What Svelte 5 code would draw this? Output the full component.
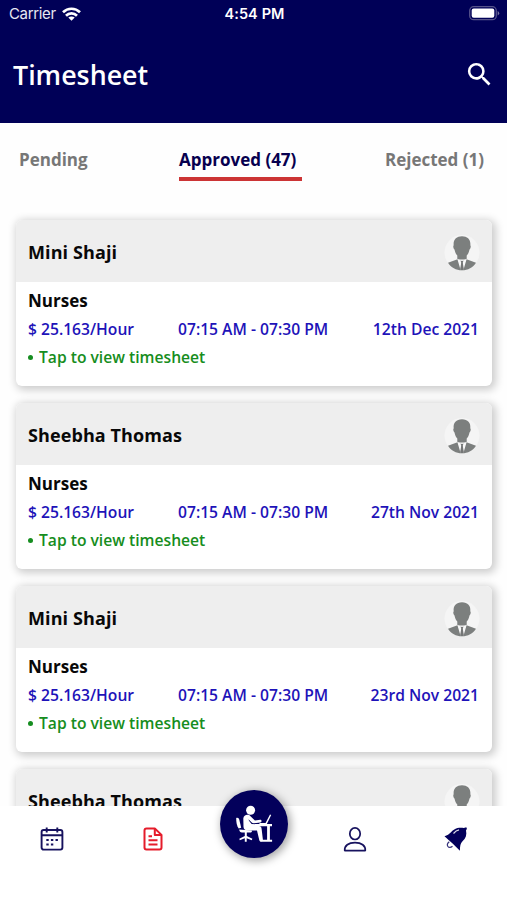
<script>
  const entries = [
    { name: 'Mini Shaji', date: '12th Dec 2021' },
    { name: 'Sheebha Thomas', date: '27th Nov 2021' },
    { name: 'Mini Shaji', date: '23rd Nov 2021' },
    { name: 'Sheebha Thomas' }
  ];
</script>

<div class="screen">
  <header>
    <div class="status">
      <div class="carrier">
        <span>Carrier</span>
        <svg width="19" height="14" viewBox="0 0 19 14" fill="none" stroke="#fff" stroke-width="2.700">
          <path d="M1 5.200C5.800.6 13.200.6 18 5.200M4 8.700c3-3 8-3 11 0" />
          <path d="M9.500 13.800L6.300 10.600c1.800-1.500 4.600-1.500 6.400 0z" fill="#fff" stroke="none" />
        </svg>
      </div>
      <span class="time">4:54 PM</span>
      <svg class="battery" width="31" height="15" viewBox="0 0 31 15">
        <rect x=".7" y=".7" width="26.600" height="13" rx="4" fill="none" stroke="#56538a" stroke-width="1.300" />
        <rect x="2.700" y="2.600" width="22.600" height="9.200" rx="2" fill="#fff" />
        <path d="M28.700 5v4.500q1.500-.7 1.500-2.250T28.700 5z" fill="#77749f" />
      </svg>
    </div>
    <div class="titlebar">
      <h1>Timesheet</h1>
      <svg width="31" height="31" viewBox="0 0 24 24" fill="#fff">
        <path d="M15.500 14h-.79l-.28-.27A6.471 6.471 0 0 0 16 9.500 6.500 6.500 0 1 0 9.500 16c1.610 0 3.090-.59 4.230-1.570l.27.28v.79l5 4.990L20.490 19l-4.990-5zm-6 0C7.010 14 5 11.990 5 9.500S7.010 5 9.500 5 14 7.010 14 9.500 11.990 14 9.500 14z" />
      </svg>
    </div>
  </header>

  <nav class="tabs">
    <span>Pending</span>
    <span class="active">Approved (47)</span>
    <span class="last">Rejected (1)</span>
  </nav>

  <main>
    {#each entries as entry}
      <article>
        <div class="head">
          <h2>{entry.name}</h2>
          <svg width="36" height="36" viewBox="0 0 36 36">
            <circle cx="18" cy="17.500" r="17.500" fill="#f5f5f5" />
            <path d="M18 1.300c5.700 0 9 3.500 8.300 9 .9.900.3 3.300-.8 4.300-.6 3-1.600 4.800-2.800 6v3.800h-9.400v-3.800c-1.200-1.200-2.200-3-2.800-6-1.100-1-1.700-3.400-.8-4.300-.7-5.500 2.600-9 8.300-9z" fill="#7c7f7e" />
            <path d="M13.500 24.300L4 27.700C7 32.500 12 35.300 18 35.300s11-2.800 14-7.600l-9.500-3.400L18 26z" fill="#7c7f7e" />
            <path d="M13.300 23.700l3.200 11 1.100-7h.8l1.100 7 3.200-11-4.700 2.400z" fill="#f8f8f8" />
            <path d="M16.700 26h2.600l-.5 1.800.9 6L18 35.200l-1.700-1.400.9-6z" fill="#747676" />
          </svg>
        </div>
        {#if entry.date}
          <div class="body">
            <h3>Nurses</h3>
            <div class="row">
              <span>$ 25.163/Hour</span>
              <span>07:15 AM - 07:30 PM</span>
              <span>{entry.date}</span>
            </div>
            <div class="tap"><i></i><span>Tap to view timesheet</span></div>
          </div>
        {/if}
      </article>
    {/each}
  </main>

  <footer>
    <svg width="24" height="24" viewBox="0 0 24 24" fill="none" stroke="#17125e" stroke-width="1.900">
      <rect x="1.600" y="3" width="20.800" height="19.600" rx="2" />
      <path d="M1.600 8.300h20.800M6.700.5v5M17.300.5v5" />
      <path d="M6.300 13h2.400m2.200 0h2.400m2.200 0h2.400M6.300 17.500h2.400m2.200 0h2.400" stroke-width="2" />
    </svg>
    <svg width="24" height="24" viewBox="0 0 24 24" fill="none" stroke="#e51c2b" stroke-width="2" stroke-linejoin="round">
      <path d="M5.500 1.500h8.300l6.700 6.400v12.600q0 2-2 2h-13q-2 0-2-2v-17q0-2 2-2z" />
      <path d="M13.800 1.500v6.400h6.700M7.500 9.300H11M7.500 13.300h9M7.500 17.600h9" />
    </svg>
    <div class="fab">
      <svg width="38" height="38" viewBox="0 0 38 38" fill="#fff">
        <circle cx="15.600" cy="5.200" r="4.500" />
        <path d="M8.300 13.500c.5-4.100 5.200-4.700 7.200-2.200l4.400 4.200 5.300-.7c1.700 0 1.900 2.200.3 2.600l-6.700.9c-1 0-1.700-.4-2.300-1l-3-3 .5 1.500 2.600 3.200 6 .2v1.800h1.300c1.900 0 2.400 1 2.700 2.700l1.300 11.100c.2 1.800-3.200 2.200-3.600.4l-2.300-9.700h-9.400c-2.500 0-3.800-1.200-4.100-3.500z" />
        <path d="M1.200 13c1.600-.9 2.700.2 3.100 1.700l1.900 8.100-2.500.8C1.800 21.200 1.200 17 1.200 13z" />
        <path d="M4.200 24.500l12.600 1q.7 2-2 2h-3v3.600l5.600 2.700-.7 1.400-5-1.900v3.400H9.800v-3.400l-5 1.900-.5-1.400 5.500-2.700v-3.600H7q-2.500 0-2.800-3z" />
        <path d="M20 19h17v2.200h-2.100v13.600h2.200v1.900H25.200v-1.900h6.900V21.200H20z" />
        <path d="M30.300 18.500l4.700-9 1.200.6-4.100 8.400zM24.500 18h7.500v1.300h-7.500z" />
      </svg>
    </div>
    <svg width="24" height="25" viewBox="0 0 24 26" fill="none" stroke="#17125e" stroke-width="1.800" stroke-linejoin="round">
      <ellipse cx="12" cy="7" rx="5.400" ry="6" />
      <path d="M1.300 24.500c-.3-4.900 3.800-8.300 10.700-8.300s11 3.400 10.700 8.300z" />
    </svg>
    <svg width="24" height="24" viewBox="0 0 24 24">
      <path d="M.5 9.200C6 8.500 8 2.200 13.500 1.100c2.300-.5 4.500-.4 6.300 0l2.500-.8.600 1.500-.9 1.700c1 4.300-.2 8-3.500 10.700-2.100 2-2.600 5-2.600 9.500C11.500 19 6 14 .5 9.200z" fill="#03005b" />
      <path d="M9.500 6.500c1.700-2 3.500-3.200 5.500-3.600" fill="none" stroke="#d9d8e8" stroke-width="1.200" />
      <path d="M5.300 14.800c-4 3-.8 8 3.200 4.400" fill="none" stroke="#35317a" stroke-width="1.200" />
    </svg>
  </footer>
</div>

<style>
  :global(body) { margin: 0; background: #fff; }
  * { box-sizing: border-box; }
  .screen {
    width: 507px; height: 900px; overflow: hidden; background: #fefefe;
    display: flex; flex-direction: column; font-family: "Open Sans", sans-serif;
  }
  h1, h2, h3 { margin: 0; }
  svg { display: block; flex: none; }
  span, h1, h2, h3 { white-space: nowrap; }
  header { height: 123px; flex: none; background: #000057; color: #fff; }
  .status {
    height: 27px; padding: 0 7px 0 9px; display: grid; grid-template-columns: 1fr auto 1fr;
    align-items: center; font: 400 15px/27px Inter, sans-serif; color: #e8e8f2;
  }
  .carrier { display: flex; align-items: center; gap: 6px; letter-spacing: -.35px; }
  .time { font-weight: 600; font-size: 14.500px; letter-spacing: .1px; color: #fff; }
  .battery { justify-self: end; }
  .titlebar { height: 96px; padding: 0 12px 0 13px; display: flex; align-items: center; justify-content: space-between; }
  h1 { font-size: 26.800px; font-weight: 600; line-height: 36px; }
  .titlebar svg { margin-bottom: 2px; }
  .tabs {
    height: 97px; flex: none; padding: 20px 23px 0 19px; display: grid; grid-template-columns: 160px 123px 1fr;
    align-items: start; font-size: 17px; font-weight: 700; line-height: 34px; color: #777;
  }
  .active { color: #07004f; height: 38px; border-bottom: 4px solid #cc3435; }
  .last { justify-self: end; }
  main { height: 606px; flex: none; overflow: hidden; margin-top: -20px; padding: 20px 15px 0 16px; }
  article { height: 166px; margin-bottom: 17px; border-radius: 6px; background: #fff; box-shadow: 2px 2px 9px 2px rgba(0, 0, 0, .2); }
  .head { height: 62px; padding: 1px 12px 0; display: flex; align-items: center; justify-content: space-between; background: #eee; border-radius: 6px 6px 0 0; }
  .head svg { margin-top: 2px; }
  h2 { font-size: 18px; font-weight: 700; letter-spacing: .1px; color: #080808; }
  .body { padding: 5px 13px 0 12px; }
  h3 { font-size: 17px; font-weight: 700; line-height: 28px; color: #080808; }
  .row { display: grid; grid-template-columns: 150px 1fr auto; font-size: 15.650px; font-weight: 600; line-height: 29px; color: #1e13b9; }
  .tap { display: flex; align-items: center; gap: 6px; font-size: 15.650px; font-weight: 600; line-height: 27px; color: #168d20; }
  .tap i { width: 5px; height: 5px; border-radius: 50%; background: #168d20; }
  footer { position: relative; height: 94px; flex: none; background: #fff; padding: 21px 0 0 1px; display: grid; grid-template-columns: repeat(5, 1fr); align-items: start; justify-items: center; }
  .fab { width: 68px; height: 68px; margin-top: -37px; border-radius: 50%; background: #03005b; display: grid; place-items: center; box-shadow: 2px 2px 9px 1px rgba(0, 0, 0, .35); }
</style>
